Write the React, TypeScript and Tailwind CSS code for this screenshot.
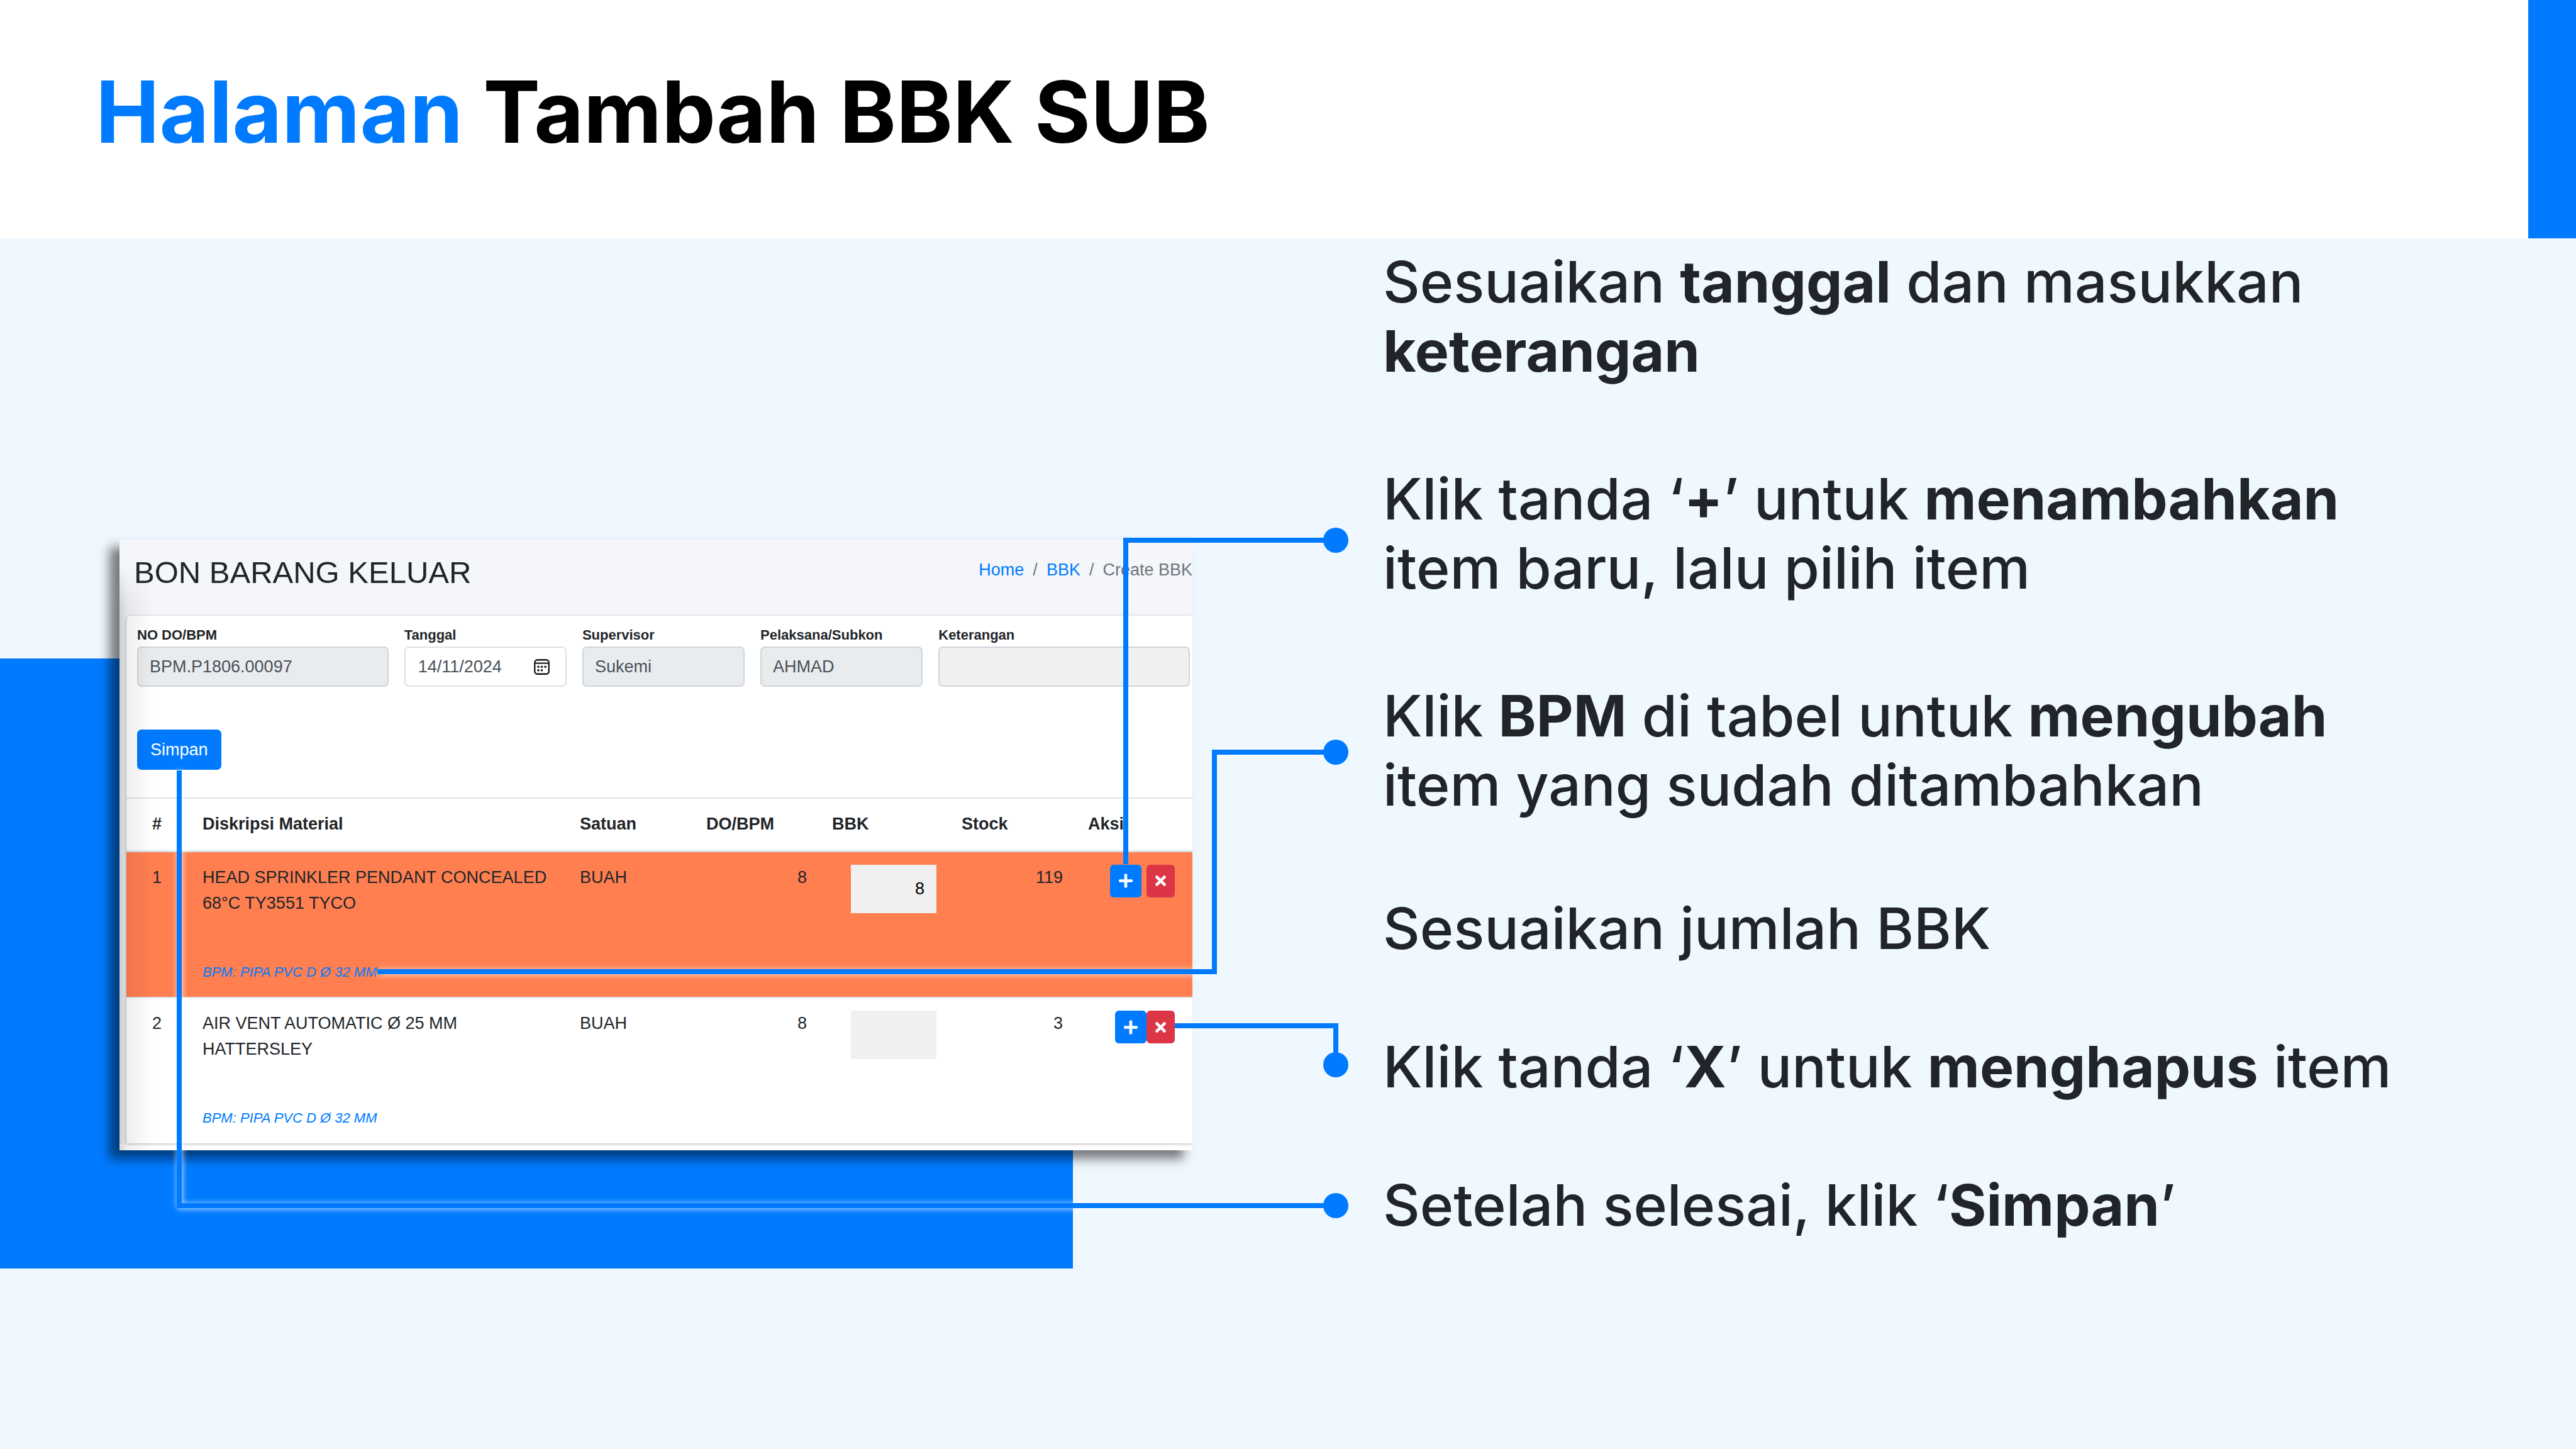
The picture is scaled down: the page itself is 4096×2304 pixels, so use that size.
import React from "react";

type Item = {
  no: number;
  name: string;
  bpm: string;
  unit: string;
  ordered: number;
  issued: string;
  stock: number;
  highlighted?: boolean;
};

const items: Item[] = [
  {
    no: 1,
    name: "HEAD SPRINKLER PENDANT CONCEALED 68°C TY3551 TYCO",
    bpm: "BPM: PIPA PVC D Ø 32 MM",
    unit: "BUAH",
    ordered: 8,
    issued: "8",
    stock: 119,
    highlighted: true,
  },
  {
    no: 2,
    name: "AIR VENT AUTOMATIC Ø 25 MM HATTERSLEY",
    bpm: "BPM: PIPA PVC D Ø 32 MM",
    unit: "BUAH",
    ordered: 8,
    issued: "",
    stock: 3,
  },
];

function CalendarIcon() {
  return (
    <svg viewBox="0 0 24 24" className="h-[25px] w-[25px] shrink-0" fill="none" aria-hidden="true">
      <rect x="1.2" y="1.2" width="21.6" height="21.6" rx="4" stroke="#111" strokeWidth="2.2" />
      <path d="M1 6.3h22" stroke="#111" strokeWidth="2" />
      <g fill="#111">
        <circle cx="6.7" cy="11.8" r="1.7" />
        <circle cx="12" cy="11.8" r="1.7" />
        <circle cx="17.3" cy="11.8" r="1.7" />
        <circle cx="6.7" cy="17" r="1.7" />
        <circle cx="12" cy="17" r="1.7" />
      </g>
    </svg>
  );
}

function PlusIcon() {
  return (
    <svg viewBox="0 0 448 512" className="h-[25px] w-[22px]" fill="currentColor" aria-hidden="true">
      <path d="M416 208H272V64c0-17.67-14.33-32-32-32h-32c-17.67 0-32 14.33-32 32v144H32c-17.67 0-32 14.33-32 32v32c0 17.67 14.33 32 32 32h144v144c0 17.67 14.33 32 32 32h32c17.67 0 32-14.33 32-32V304h144c17.67 0 32-14.33 32-32v-32c0-17.67-14.33-32-32-32z" />
    </svg>
  );
}

function TimesIcon() {
  return (
    <svg viewBox="0 0 352 512" className="h-[25px] w-[17px]" fill="currentColor" aria-hidden="true">
      <path d="M242.72 256l100.07-100.07c12.28-12.28 12.28-32.19 0-44.48l-22.24-22.24c-12.28-12.28-32.19-12.28-44.48 0L176 189.28 75.93 89.21c-12.28-12.28-32.19-12.28-44.48 0L9.21 111.45c-12.28 12.28-12.28 32.19 0 44.48L109.28 256 9.21 356.07c-12.28 12.28-12.28 32.19 0 44.48l22.24 22.24c12.28 12.28 32.2 12.28 44.48 0L176 322.72l100.07 100.07c12.28 12.28 32.2 12.28 44.48 0l22.24-22.24c12.28-12.28 12.28-32.19 0-44.48L242.72 256z" />
    </svg>
  );
}

type FieldProps = {
  id: string;
  label: string;
  value: string;
  span: string;
  box: string;
  icon?: React.ReactNode;
};

function Field({ id, label, value, span, box, icon }: FieldProps) {
  return (
    <div className={`flex flex-col ${span}`}>
      <label htmlFor={id} className="mb-[2px] text-[22px] leading-[33px] font-bold">
        {label}
      </label>
      <div className={`flex h-16 items-center rounded-[7px] border-2 ${box}`}>
        <input
          id={id}
          defaultValue={value}
          className="w-full min-w-0 bg-transparent text-[27px] text-[#495057] outline-none"
        />
        {icon}
      </div>
    </div>
  );
}

function ItemRow({ item }: { item: Item }) {
  return (
    <tr
      className={
        item.highlighted
          ? "h-[233px] bg-[#ff7f50] align-top"
          : "h-[232px] border-t-2 border-[#dee2e6] bg-white align-top"
      }
    >
      <td className="pt-5 text-center">{item.no}</td>
      <td className="pt-5 pr-5 pl-6">
        <div className="h-[154px]">{item.name}</div>
        <a href="#bpm" className="block text-[22px] leading-[33px] text-[#007bff] italic">
          {item.bpm}
        </a>
      </td>
      <td className="px-5 pt-5">{item.unit}</td>
      <td className="px-5 pt-5 text-right">{item.ordered}</td>
      <td className="px-5 pt-5">
        <input
          aria-label={`BBK ${item.no}`}
          defaultValue={item.issued}
          className="ml-auto block h-[77px] w-[136px] bg-[#f0f0f0] px-[19px] text-right text-[27px] text-black"
        />
      </td>
      <td className="px-5 pt-5 text-right">{item.stock}</td>
      <td className="pt-5 pr-7">
        <div className={item.highlighted ? "flex justify-end gap-2" : "flex justify-end"}>
          <button
            aria-label="Tambah item"
            className="flex h-[52px] items-center rounded-[6px] bg-[#007bff] px-[14px] text-white"
          >
            <PlusIcon />
          </button>
          <button
            aria-label="Hapus item"
            className="flex h-[52px] items-center rounded-[6px] bg-[#dc3545] px-[14px] text-white"
          >
            <TimesIcon />
          </button>
        </div>
      </td>
    </tr>
  );
}

function BbkForm() {
  return (
    <section className="relative overflow-hidden bg-[#f4f6f9] font-['Liberation_Sans',Arial,sans-serif] text-[27px] leading-[41px] text-[#212529]">
      <div className="flex h-[121px] items-start justify-between pl-[23px]">
        <h2 className="pt-[22px] text-[49px] leading-[60px]">BON BARANG KELUAR</h2>
        <nav aria-label="Breadcrumb" className="flex gap-[14px] pt-7 text-[#6c757d]">
          <a href="#home" className="text-[#007bff]">Home</a>
          <span>/</span>
          <a href="#bbk" className="text-[#007bff]">BBK</a>
          <span>/</span>
          <span>Create BBK</span>
        </nav>
      </div>

      <div className="relative ml-[11px] rounded-tl-[7px] bg-white shadow-[0_1px_4px_rgba(0,0,0,0.3)]">
        <form className="pt-[14px] pr-1 pb-11 pl-[17px]" onSubmit={(e) => e.preventDefault()}>
          <div className="grid grid-cols-12 gap-x-[25px]">
            <Field id="no-do" label="NO DO/BPM" value="BPM.P1806.00097" span="col-span-3" box="border-[#ced4da] bg-[#e9ecef] px-[18px]" />
            <Field id="tanggal" label="Tanggal" value="14/11/2024" span="col-span-2" box="border-[#dee2e6] bg-white pr-[25px] pl-5" icon={<CalendarIcon />} />
            <Field id="supervisor" label="Supervisor" value="Sukemi" span="col-span-2" box="border-[#ced4da] bg-[#e9ecef] px-[18px]" />
            <Field id="pelaksana" label="Pelaksana/Subkon" value="AHMAD" span="col-span-2" box="border-[#ced4da] bg-[#e9ecef] px-[18px]" />
            <Field id="keterangan" label="Keterangan" value="" span="col-span-3" box="border-[#ced4da] bg-[#f0f0f0] px-[18px]" />
          </div>
          <button type="submit" className="mt-[68px] block h-16 rounded-[7px] bg-[#007bff] px-[21px] text-white">
            Simpan
          </button>
        </form>

        <table className="w-full table-fixed border-collapse">
          <colgroup>
            <col className="w-[97px]" />
            <col />
            <col className="w-[201px]" />
            <col className="w-[200px]" />
            <col className="w-[206px]" />
            <col className="w-[201px]" />
            <col className="w-[186px]" />
          </colgroup>
          <thead>
            <tr className="h-[84px] border-t-2 border-b-[3px] border-[#dee2e6] text-left">
              <th className="text-center">#</th>
              <th className="pr-5 pl-6">Diskripsi Material</th>
              <th className="px-5">Satuan</th>
              <th className="px-5">DO/BPM</th>
              <th className="px-5">BBK</th>
              <th className="px-5">Stock</th>
              <th className="px-5">Aksi</th>
            </tr>
          </thead>
          <tbody>
            {items.map((item) => (
              <ItemRow key={item.no} item={item} />
            ))}
          </tbody>
        </table>
      </div>
      <div className="h-[11px] bg-white" />
      <div className="pointer-events-none absolute top-10 bottom-0 left-0 w-[54px] bg-linear-to-r from-black/16 via-black/6 via-25% to-transparent mask-[linear-gradient(to_bottom,transparent,black_70px)]" />
    </section>
  );
}

function Connectors() {
  return (
    <svg
      viewBox="0 0 4096 2304"
      className="pointer-events-none absolute top-0 left-0 w-full"
      fill="none"
      stroke="#007bff"
      strokeWidth="8"
      aria-hidden="true"
    >
      <path d="M1790 1374V859H2124" />
      <path d="M1868 1631H2124V1693" />
      <g className="drop-shadow-[1px_1px_5px_rgba(255,255,255,0.8)]">
        <path d="M600 1545H1931V1196H2124" />
        <path d="M285 1225V1917H2124" />
      </g>
      <g fill="#007bff" stroke="none">
        <circle cx="2124" cy="859" r="20" />
        <circle cx="2124" cy="1196" r="20" />
        <circle cx="2124" cy="1693" r="20" />
        <circle cx="2124" cy="1917" r="20" />
      </g>
    </svg>
  );
}

function Steps() {
  return (
    <ol className="flex flex-col gap-[110px] text-[91px] leading-[110px] font-medium text-[#212529]">
      <li className="pb-[15px]">
        Sesuaikan <b className="font-bold">tanggal</b> dan masukkan
        <br />
        <b className="font-bold">keterangan</b>
      </li>
      <li className="pb-[15px]">
        Klik tanda ‘<b className="font-bold">+</b>’ untuk <b className="font-bold">menambahkan</b>
        <br />
        item baru, lalu pilih item
      </li>
      <li className="pb-2">
        Klik <b className="font-bold">BPM</b> di tabel untuk <b className="font-bold">mengubah</b>
        <br />
        item yang sudah ditambahkan
      </li>
      <li>Sesuaikan jumlah BBK</li>
      <li>
        Klik tanda ‘<b className="font-bold">X</b>’ untuk <b className="font-bold">menghapus</b> item
      </li>
      <li>
        Setelah selesai, klik ‘<b className="font-bold">Simpan</b>’
      </li>
    </ol>
  );
}

export default function App() {
  return (
    <main className="relative flex min-h-screen flex-col bg-[#f0f8ff] font-['Inter',sans-serif]">
      <header className="flex h-[379px] items-start justify-between bg-white pl-[152px]">
        <h1 className="pt-[95px] text-[136px] leading-[166px] font-bold text-black">
          <span className="text-[#007bff]">Halaman</span> Tambah BBK SUB
        </h1>
        <div className="w-[76px] self-stretch bg-[#007bff]" />
      </header>

      <div className="relative grid grid-cols-[1706fr_1897fr] items-start gap-x-[303px] pl-[190px]">
        <div className="absolute top-[668px] left-0 h-[970px] w-[41.66%] bg-[#007bff]" />
        <div className="relative mt-[479px] shadow-[-15px_13px_16px_1px_rgba(0,0,0,0.5)]">
          <BbkForm />
        </div>
        <div className="relative pt-[14px]">
          <Steps />
        </div>
      </div>

      <Connectors />
    </main>
  );
}
